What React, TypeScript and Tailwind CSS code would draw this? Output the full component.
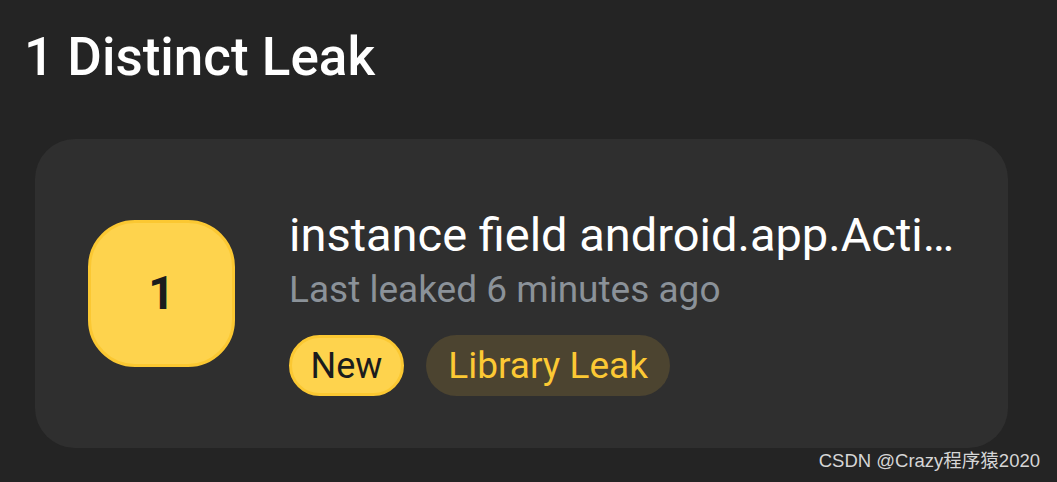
export default function App() {
  return (
    <div
      className="relative w-[1057px] h-[482px] overflow-hidden bg-[#242424]"
      style={{ fontFamily: 'Roboto, "Noto Sans", sans-serif' }}
    >
      <h1 className="pl-6 pt-[27px] text-[53px] leading-[60px] font-medium text-white">
        1 Distinct Leak
      </h1>
      <div className="mt-[52px] ml-[35px] w-[973px] h-[309px] rounded-[40px] bg-[#2f2f2f] flex items-center pl-[53px] pr-[50px]">
        <div className="w-[147px] h-[147px] shrink-0 rounded-[47px] bg-[#fed34d] border-[3px] border-[#fbc832] flex items-center justify-center text-[46px] font-bold text-[#1b1c1d]">
          1
        </div>
        <div className="self-start pt-[70px] ml-[54px] flex flex-col min-w-0">
          <div className="text-[47px] leading-[52px] text-white whitespace-nowrap">
            instance field android.app.Acti…
          </div>
          <div className="mt-[7px] text-[37px] leading-[44px] text-[#8b9299] whitespace-nowrap">
            Last leaked 6 minutes ago
          </div>
          <div className="mt-[23px] flex gap-[22px]">
            <div className="h-[61px] px-[18.5px] rounded-full bg-[#fed34d] border-[3px] border-[#fbc832] flex items-center text-[36px] leading-none text-[#1b1c1d]">
              New
            </div>
            <div className="h-[61px] px-[22.5px] rounded-full bg-[#4c4430] flex items-center text-[37px] leading-none text-[#fcc934]">
              Library Leak
            </div>
          </div>
        </div>
      </div>
      <div
        className="absolute right-[17px] bottom-[10px] text-[18.5px] leading-[22px] text-[#d6d6d6]"
        style={{ fontFamily: '"Liberation Sans", "Noto Sans CJK SC", sans-serif' }}
      >
        CSDN @Crazy程序猿2020
      </div>
    </div>
  );
}
